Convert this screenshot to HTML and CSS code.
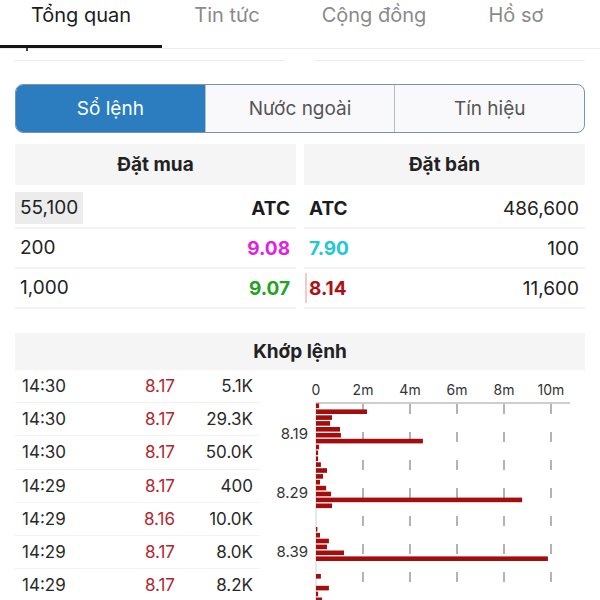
FILE: index.html
```html
<!DOCTYPE html>
<html lang="vi">
<head>
    <meta charset="UTF-8">
    <meta name="viewport" content="width=device-width, initial-scale=1.0">
    <title>Tổng quan - Sổ lệnh</title>
    <link rel="stylesheet" href="styles.css">
</head>
<body>
    <nav class="top-tabs">
        <a class="top-tab tab-1 active">Tổng quan</a>
        <a class="top-tab tab-2">Tin tức</a>
        <a class="top-tab tab-3">Cộng đồng</a>
        <a class="top-tab tab-4">Hồ sơ</a>
    </nav>

    <div class="stat-lines">
        <div></div>
        <div></div>
    </div>

    <div class="segment">
        <button class="segment-btn active">Sổ lệnh</button>
        <button class="segment-btn">Nước ngoài</button>
        <button class="segment-btn">Tín hiệu</button>
    </div>

    <div class="book">
        <div class="book-side buy">
            <div class="book-head">Đặt mua</div>
            <div class="book-row"><span class="vol highlight">55,100</span><span class="price atc">ATC</span></div>
            <div class="book-row"><span class="vol">200</span><span class="price ceil">9.08</span></div>
            <div class="book-row"><span class="vol">1,000</span><span class="price up">9.07</span></div>
        </div>
        <div class="book-side sell">
            <div class="book-head">Đặt bán</div>
            <div class="book-row"><span class="price atc">ATC</span><span class="vol">486,600</span></div>
            <div class="book-row"><span class="price floor">7.90</span><span class="vol">100</span></div>
            <div class="book-row"><span class="depth-bar" style="width: 2px"></span><span class="price down">8.14</span><span class="vol">11,600</span></div>
        </div>
    </div>

    <div class="match-head">Khớp lệnh</div>

    <div class="match">
        <div class="trades" id="trades">
            <!-- trade rows are inserted here -->
        </div>
        <svg class="volume-chart" id="chart" width="325" height="231" viewBox="0 0 325 231"></svg>
    </div>

    <script>
        const trades = [
            ['14:30', '8.17', '5.1K'],
            ['14:30', '8.17', '29.3K'],
            ['14:30', '8.17', '50.0K'],
            ['14:29', '8.17', '400'],
            ['14:29', '8.16', '10.0K'],
            ['14:29', '8.17', '8.0K'],
            ['14:29', '8.17', '8.2K']
        ];

        // volume (millions) per price step, starting at 8.14
        const volumes = [
            0.13, 2.17, 0.68, 0.6, 1.02, 1.06, 4.55, 0.13, 0.09, 0.09,
            0.21, 0.47, 0.3, 0.17, 0.43, 0.64, 8.77, 0.68, 0, 0,
            0, 0.06, 0.17, 0.55, 0.47, 1.19, 9.87, 0, 0, 0.21,
            0, 0.55, 0.09, 0.26
        ];

        function renderTrades() {
            const list = document.getElementById('trades');
            trades.forEach(t => {
                const row = document.createElement('div');
                row.classList.add('trade-row');
                row.innerHTML = `
                    <span class="trade-time">${t[0]}</span>
                    <span class="trade-price">${t[1]}</span>
                    <span class="trade-vol">${t[2]}</span>
                `;
                list.appendChild(row);
            });
        }

        function renderChart() {
            const svg = document.getElementById('chart');
            const x0 = 56, axisY = 33, perM = 23.5, step = 5.88, barH = 4.6;
            let html = '';

            // dashed grid + tick labels
            for (let k = 0; k <= 5; k++) {
                const x = x0 + k * 47;
                const label = k === 0 ? '0' : (k * 2) + 'm';
                html += `<text class="axis-label" x="${x}" y="21" text-anchor="middle">${label}</text>`;
                if (k > 0) {
                    html += `<line class="grid" x1="${x}" y1="${axisY + 1}" x2="${x}" y2="231"></line>`;
                }
            }
            html += `<line class="axis-v" x1="${x0}" y1="${axisY}" x2="${x0}" y2="231"></line>`;
            html += `<line class="axis-h" x1="${x0}" y1="${axisY}" x2="310" y2="${axisY}"></line>`;

            volumes.forEach((v, i) => {
                if (!v) return;
                const y = axisY + 0.5 + i * step;
                html += `<rect class="bar" x="${x0}" y="${y.toFixed(1)}" width="${(v * perM).toFixed(1)}" height="${barH}"></rect>`;
            });

            [5, 15, 25].forEach(i => {
                const y = axisY + 0.5 + i * step + barH / 2;
                const price = (8.14 + i * 0.01).toFixed(2);
                html += `<text class="price-label" x="48" y="${y.toFixed(1)}" text-anchor="end">${price}</text>`;
            });

            svg.innerHTML = html;
        }

        document.addEventListener('DOMContentLoaded', () => {
            renderTrades();
            renderChart();
        });
    </script>
</body>
</html>
```

FILE: styles.css
```css
body {
    font-family: Inter, "Noto Sans", sans-serif;
    background-color: white;
    color: #222;
    margin: 0;
    width: 600px;
    height: 600px;
    overflow: hidden;
}

/* top navigation */
.top-tabs {
    display: flex;
    border-bottom: 1px solid #ececec;
}

.top-tab {
    position: relative;
    height: 45px;
    line-height: 30px;
    font-size: 20px;
    color: #8a8a8a;
    text-align: center;
    border-bottom: 3px solid transparent;
}

.top-tab.active {
    color: #1c1c1c;
    border-bottom-color: #151515;
}

/* little notch under the active underline */
.top-tab.active::after {
    content: "";
    position: absolute;
    left: 26px;
    bottom: -6px;
    width: 2px;
    height: 3px;
    background: #444;
}

.tab-1 { width: 162px; }
.tab-2 { width: 130px; }
.tab-3 { width: 164px; }
.tab-4 { width: 120px; }

.stat-lines {
    display: flex;
    gap: 29px;
    padding: 11px 15px 0 14px;
}

.stat-lines div {
    flex: 1;
    border-top: 1px solid #ececec;
}

/* segmented control */
.segment {
    display: flex;
    margin: 23px 15px 0;
    height: 49px;
    box-sizing: border-box;
    border: 1.5px solid #7896aa;
    border-radius: 8px;
    overflow: hidden;
    background: #f9f9fb;
}

.segment-btn {
    flex: 1;
    border: none;
    border-left: 1px solid #b4c0c8;
    background: transparent;
    font-family: inherit;
    font-size: 19px;
    color: #555;
    padding: 0;
}

.segment-btn:first-child {
    border-left: none;
}

.segment-btn.active {
    background-color: #2b7dbf;
    color: white;
}

/* order book */
.book {
    display: flex;
    gap: 8px;
    padding: 0 15px;
    margin-top: 11px;
}

.book-side {
    flex: 1;
}

.book-head {
    height: 41px;
    line-height: 41px;
    background: #f5f5f5;
    text-align: center;
    font-weight: 700;
    font-size: 19px;
    margin-bottom: 4px;
}

.book-row {
    position: relative;
    display: flex;
    justify-content: space-between;
    align-items: center;
    height: 38px;
    border-bottom: 2px solid #f3f3f3;
    font-size: 19px;
}

.buy .book-row {
    padding-right: 6px;
}

.sell .book-row {
    padding: 0 6px 0 5px;
}

.buy .vol {
    padding: 0 5px;
    line-height: 32px;
}

.vol.highlight {
    background: #ececec;
}

.price {
    font-weight: 700;
}

.price.atc { color: #1c1c1c; }
.price.ceil { color: #e022e0; }
.price.up { color: #22a324; }
.price.floor { color: #22c9d2; }
.price.down { color: #b00f12; }

.depth-bar {
    position: absolute;
    left: 1px;
    top: 4px;
    bottom: 4px;
    background: #f5c9cd;
}

/* matched orders */
.match-head {
    margin: 24px 15px 0;
    height: 37px;
    line-height: 37px;
    background: #f5f5f5;
    text-align: center;
    font-weight: 700;
    font-size: 19px;
}

.match {
    display: flex;
    padding-left: 15px;
}

.trades {
    width: 245px;
}

.trade-row {
    display: flex;
    align-items: center;
    height: 32.2px;
    padding-left: 7px;
    border-bottom: 1.5px solid #f2f2f2;
    font-size: 17px;
}

.trade-time {
    width: 100px;
    color: #2a2a2a;
}

.trade-price {
    width: 53px;
    text-align: right;
    color: #b3262e;
}

.trade-vol {
    width: 78px;
    text-align: right;
    color: #2a2a2a;
}

.volume-chart {
    display: block;
}

.axis-label,
.price-label {
    font-family: Inter, "Noto Sans", sans-serif;
    fill: #333;
    dominant-baseline: middle;
}

.axis-label {
    font-size: 14px;
}

.price-label {
    font-size: 15px;
}

.grid {
    stroke: #9a9a9a;
    stroke-width: 1.5;
    stroke-dasharray: 10 18;
}

.axis-v {
    stroke: #d0d0d0;
    stroke-width: 1;
}

.axis-h {
    stroke: #bdbdbd;
    stroke-width: 1.5;
}

.bar {
    fill: #a30d0d;
}
```
